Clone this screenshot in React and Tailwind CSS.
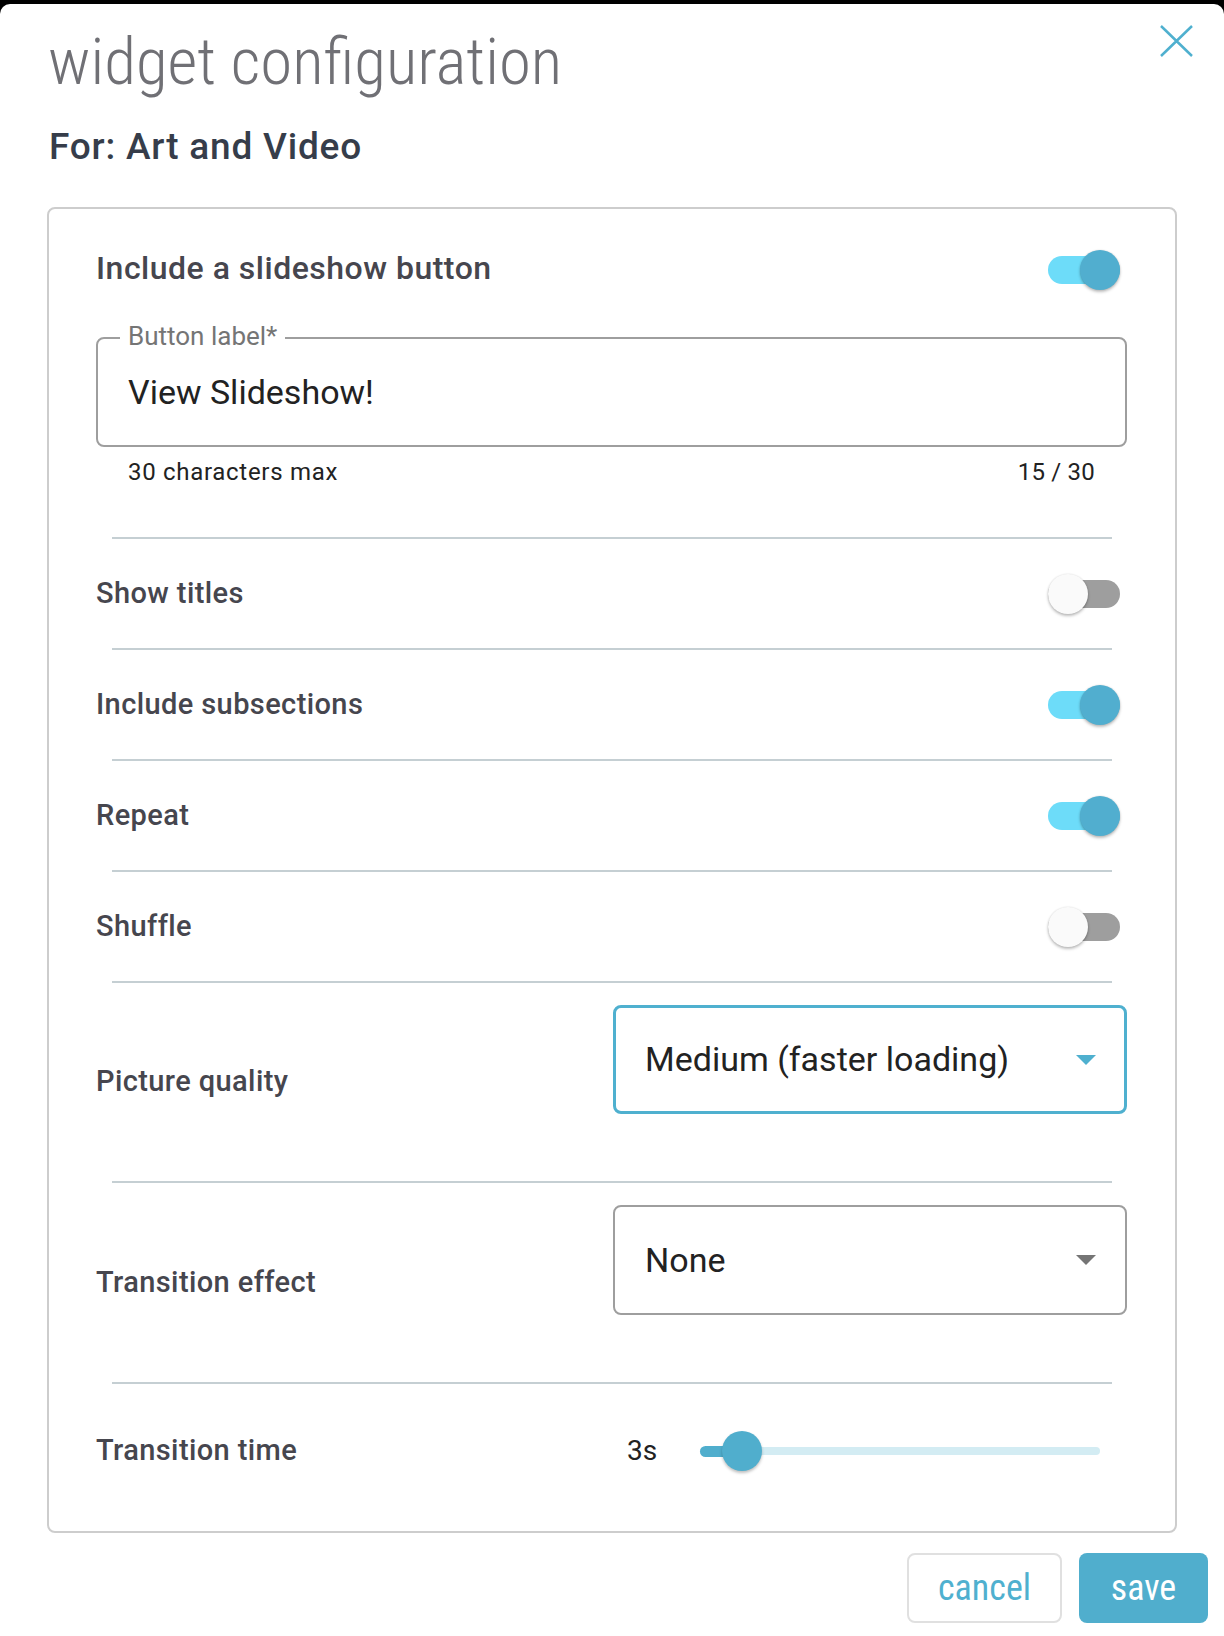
import React from "react";

const Toggle = ({ on }) => (
  <div className="relative mr-[7px] h-[42px] w-[72px] shrink-0">
    <div
      className={`absolute left-0 right-0 top-[7px] h-[28px] rounded-full ${
        on ? "bg-[#6ddcf9]" : "bg-[#9e9e9e]"
      }`}
    />
    <div
      className={`absolute top-[1px] h-[40px] w-[40px] rounded-full shadow-[0_2px_3px_rgba(0,0,0,0.25),0_0_2px_rgba(0,0,0,0.12)] ${
        on ? "right-0 bg-[#51aecf]" : "left-0 bg-[#fafafa]"
      }`}
    />
  </div>
);

const Divider = () => <div className="ml-[16px] mr-[15px] h-[2px] bg-[#c5cfd3]" />;

const Label = ({ children }) => (
  <span className="text-[29px] font-medium tracking-[0.4px] text-[#46464e]">{children}</span>
);

const Caret = ({ color }) => (
  <svg width="20" height="10" viewBox="0 0 20 10">
    <path d="M0 0 L20 0 L10 10 Z" fill={color} />
  </svg>
);

const toggles = [
  { label: "Show titles", on: false },
  { label: "Include subsections", on: true },
  { label: "Repeat", on: true },
  { label: "Shuffle", on: false },
];

export default function App() {
  return (
    <div className="min-h-screen bg-black pt-[4px] font-[family-name:Roboto,sans-serif]">
      <div className="relative min-h-[1632px] rounded-t-[10px] bg-white">
        <button className="absolute right-[31px] top-[21px]" aria-label="Close">
          <svg width="33" height="32" viewBox="0 0 33 32">
            <path d="M1 1 L32 31 M32 1 L1 31" stroke="#4fb0cf" strokeWidth="2.5" fill="none" />
          </svg>
        </button>

        <h1 className="pl-[48px] pt-[26px] font-[family-name:'Roboto_Condensed',Roboto,sans-serif] text-[65px] font-light leading-[64px] text-[#707075] [font-stretch:75%]">
          widget configuration
        </h1>
        <h2 className="mt-[35px] pl-[49px] text-[37px] font-medium leading-[36px] tracking-[0.8px] text-[#363d4a]">
          For: Art and Video
        </h2>

        <div className="mx-[47px] mt-[42px] rounded-[8px] border-2 border-[#cdcdcd] pb-[13px] pl-[47px] pr-[48px] pt-[27px]">
          <div className="flex h-[64px] items-center justify-between">
            <span className="text-[32px] font-medium tracking-[0.5px] text-[#46464e]">
              Include a slideshow button
            </span>
            <div className="mt-[4px]">
              <Toggle on />
            </div>
          </div>

          <div className="relative mt-[37px] flex h-[110px] items-center rounded-[8px] border-2 border-[#9e9e9e] pl-[30px]">
            <span className="absolute left-[22px] top-[-18px] bg-white px-[8px] text-[26px] leading-[30px] text-[#757575]">
              Button label*
            </span>
            <span className="text-[34px] text-[#222]">View Slideshow!</span>
          </div>
          <div className="mt-[10px] flex justify-between px-[32px] text-[24px] leading-[30px] text-[#222]">
            <span className="tracking-[0.7px]">30 characters max</span>
            <span className="tracking-[0.2px]">15 / 30</span>
          </div>

          <div className="mt-[50px]">
            <Divider />
          </div>

          {toggles.map((t) => (
            <div key={t.label}>
              <div className="flex h-[109px] items-center justify-between">
                <Label>{t.label}</Label>
                <Toggle on={t.on} />
              </div>
              <Divider />
            </div>
          ))}

          <div className="flex h-[198px] items-center justify-between">
            <Label>Picture quality</Label>
            <div className="mt-[22px] flex h-[109px] w-[514px] items-center justify-between self-start rounded-[8px] border-[3px] border-[#4fb0cf] pl-[29px] pr-[28px]">
              <span className="text-[34px] text-[#222]">Medium (faster loading)</span>
              <Caret color="#4fb0cf" />
            </div>
          </div>
          <Divider />

          <div className="flex h-[199px] items-center justify-between">
            <Label>Transition effect</Label>
            <div className="mt-[22px] flex h-[110px] w-[514px] items-center justify-between self-start rounded-[8px] border-2 border-[#9e9e9e] pl-[30px] pr-[29px]">
              <span className="text-[34px] text-[#222]">None</span>
              <Caret color="#757575" />
            </div>
          </div>
          <Divider />

          <div className="flex h-[134px] items-center justify-between">
            <Label>Transition time</Label>
            <div className="flex w-[514px] items-center pl-[14px]">
              <span className="w-[30px] text-[28px] text-[#222]">3s</span>
              <div className="relative ml-[43px] h-[40px] w-[400px]">
                <div className="absolute left-0 right-0 top-[16px] h-[8px] rounded-full bg-[#d3ecf3]" />
                <div className="absolute left-0 top-[14.5px] h-[11px] w-[42px] rounded-full bg-[#50aecd]" />
                <div className="absolute left-[22px] top-0 h-[40px] w-[40px] rounded-full bg-[#50aecd] shadow-[0_2px_3px_rgba(0,0,0,0.25)]" />
              </div>
            </div>
          </div>
        </div>

        <div className="mt-[20px] flex justify-end gap-[17px] pr-[16px]">
          <button className="h-[70px] w-[155px] rounded-[8px] border-2 border-[#e0e0e0] font-[family-name:'Roboto_Condensed',Roboto,sans-serif] text-[36px] text-[#4fb0cf] [font-stretch:75%]">
            cancel
          </button>
          <button className="h-[70px] w-[129px] rounded-[8px] bg-[#50aecd] font-[family-name:'Roboto_Condensed',Roboto,sans-serif] text-[36px] text-white [font-stretch:75%]">
            save
          </button>
        </div>
      </div>
    </div>
  );
}
